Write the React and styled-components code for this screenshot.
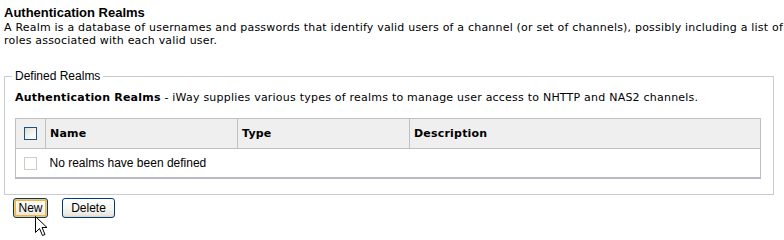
import React from "react";
import styled, { createGlobalStyle } from "styled-components";

const Global = createGlobalStyle`
  html, body { margin: 0; padding: 0; background: #ffffff; }
  body { font-family: "DejaVu Sans", Verdana, sans-serif; color: #000; }
`;

const Page = styled.div`
  position: relative;
  width: 784px;
  height: 240px;
  box-sizing: border-box;
  padding: 5px 0 0 4px;
  overflow: hidden;
`;

const Title = styled.h1`
  margin: 0;
  font-family: "Liberation Sans", Arial, sans-serif;
  font-size: 13px;
  font-weight: bold;
  line-height: 16px;
`;

const Intro = styled.p`
  margin: 0;
  font-size: 11px;
  line-height: 13px;
  letter-spacing: 0.2px;
  white-space: nowrap;
`;

const Group = styled.fieldset`
  margin: 22px 0 0 0;
  width: 770px;
  box-sizing: border-box;
  border: 1px solid #cacad2;
  padding: 0 12px 15px 10px;
  min-inline-size: 0;
`;

const Legend = styled.legend`
  margin-left: -3px;
  padding: 0 3px;
  font-family: "Liberation Sans", Arial, sans-serif;
  font-size: 12px;
  line-height: 14px;
`;

const Lead = styled.p`
  margin: 8px 0 14px 0;
  font-size: 11px;
  line-height: 13px;
  letter-spacing: 0.22px;
  white-space: nowrap;
`;

const Grid = styled.table`
  width: 745px;
  border-collapse: collapse;
  table-layout: fixed;
  border: 1px solid #c0c0c0;
  border-bottom: 2px solid #b9b9c7;
`;

const Col = styled.col`
  width: ${(p) => p.$w}px;
`;

const HeadCell = styled.th`
  height: 28px;
  padding: 0 0 0 4px;
  background: #efefef;
  border-right: 1px solid #c0c0c0;
  border-bottom: 1px solid #c0c0c0;
  text-align: left;
  font-size: 11px;
  font-weight: bold;
  line-height: 13px;
  letter-spacing: 0.2px;
  vertical-align: middle;
  &:last-child { border-right: none; }
`;

const CheckCell = styled.td`
  padding: 0 0 0 8px;
  height: ${(p) => p.$h}px;
  vertical-align: middle;
  background: ${(p) => (p.$head ? "#efefef" : "#ffffff")};
  border-right: ${(p) => (p.$head ? "1px solid #c0c0c0" : "none")};
  border-bottom: ${(p) => (p.$head ? "1px solid #c0c0c0" : "none")};
`;

const Box = styled.span`
  display: block;
  width: 11px;
  height: 11px;
  border: 1px solid ${(p) => (p.$disabled ? "#c6d1c2" : "#1c5180")};
  background: ${(p) =>
    p.$disabled ? "#ffffff" : "linear-gradient(135deg, #dcdcd6 0%, #f6f6f4 60%, #ffffff 100%)"};
`;

const EmptyCell = styled.td`
  padding: 0 0 0 4px;
  font-family: "Liberation Sans", Arial, sans-serif;
  font-size: 12px;
  line-height: 14px;
  vertical-align: middle;
`;

const Actions = styled.div`
  display: flex;
  gap: 14px;
  margin: 3px 0 0 9px;
`;

const Button = styled.button`
  width: ${(p) => p.$w}px;
  height: 20px;
  box-sizing: border-box;
  padding: 0;
  border: 1px solid #003c74;
  border-radius: 3px;
  font-family: "Liberation Sans", Arial, sans-serif;
  font-size: 12px;
  color: #000;
  background: linear-gradient(#ffffff 0%, #f7f7f3 50%, #e8e7df 90%, #d6d0c5 100%);
  box-shadow: ${(p) =>
    p.$hot ? "inset 0 0 0 1px #fcc55f, inset 0 0 0 2px #f6b23a" : "none"};
  cursor: default;
`;

const Cursor = styled.svg`
  position: absolute;
  left: 35px;
  top: 216px;
`;

export default function App() {
  return (
    <Page>
      <Global />
      <Title>Authentication Realms</Title>
      <Intro>
        A Realm is a database of usernames and passwords that identify valid users of a channel (or set of channels), possibly including a list of
        <br />
        roles associated with each valid user.
      </Intro>
      <Group>
        <Legend>Defined Realms</Legend>
        <Lead>
          <b>Authentication Realms</b> - iWay supplies various types of realms to manage user access to NHTTP and NAS2 channels.
        </Lead>
        <Grid>
          <colgroup>
            <Col $w={30} />
            <Col $w={192} />
            <Col $w={172} />
            <Col $w={351} />
          </colgroup>
          <thead>
            <tr>
              <CheckCell $h={29} $head>
                <Box />
              </CheckCell>
              <HeadCell>Name</HeadCell>
              <HeadCell>Type</HeadCell>
              <HeadCell>Description</HeadCell>
            </tr>
          </thead>
          <tbody>
            <tr>
              <CheckCell $h={28}>
                <Box $disabled />
              </CheckCell>
              <EmptyCell colSpan={3}>No realms have been defined</EmptyCell>
            </tr>
          </tbody>
        </Grid>
      </Group>
      <Actions>
        <Button $w={35} $hot>New</Button>
        <Button $w={53}>Delete</Button>
      </Actions>
      <Cursor width="13" height="21" viewBox="0 0 13 21">
        <path
          d="M0.5 0.5 L0.5 16.5 L4.5 12.5 L7.5 19.5 L10 18.5 L7 11.5 L12 11.5 Z"
          fill="#ffffff"
          stroke="#000000"
          strokeWidth="1"
          strokeLinejoin="miter"
        />
      </Cursor>
    </Page>
  );
}
